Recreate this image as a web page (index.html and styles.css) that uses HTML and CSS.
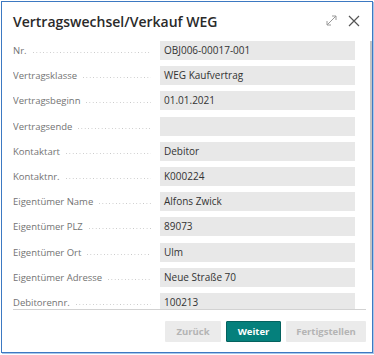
FILE: index.html
```html
<!DOCTYPE html>
<html lang="de">

<head>
    <meta charset="UTF-8">
    <meta name="viewport" content="width=device-width, initial-scale=1.0">
    <title>Vertragswechsel/Verkauf WEG</title>
    <link rel="stylesheet" href="styles.css">
</head>

<body>
    <div class="window">
        <div class="header">
            <h1 class="title">Vertragswechsel/Verkauf WEG</h1>
            <div class="headerIcons">
                <svg class="iconExpand" width="11" height="11" viewBox="0 0 11 11">
                    <path d="M1 10 L10 1 M6 1 H10 V5 M1 6 V10 H5" fill="none" stroke="#9a9a9a" stroke-width="1"/>
                </svg>
                <svg class="iconClose" width="12" height="12" viewBox="0 0 12 12">
                    <path d="M1 1 L11 11 M11 1 L1 11" fill="none" stroke="#555" stroke-width="1.2"/>
                </svg>
            </div>
        </div>

        <div class="form">
            <div class="row"><div class="label"><span>Nr.</span><i class="leader"></i></div><div class="field">OBJ006-00017-001</div></div>
            <div class="row"><div class="label"><span>Vertragsklasse</span><i class="leader"></i></div><div class="field">WEG Kaufvertrag</div></div>
            <div class="row"><div class="label"><span>Vertragsbeginn</span><i class="leader"></i></div><div class="field">01.01.2021</div></div>
            <div class="row"><div class="label"><span>Vertragsende</span><i class="leader"></i></div><div class="field"></div></div>
            <div class="row"><div class="label"><span>Kontaktart</span><i class="leader"></i></div><div class="field">Debitor</div></div>
            <div class="row"><div class="label"><span>Kontaktnr.</span><i class="leader"></i></div><div class="field">K000224</div></div>
            <div class="row"><div class="label"><span>Eigentümer Name</span><i class="leader"></i></div><div class="field">Alfons Zwick</div></div>
            <div class="row"><div class="label"><span>Eigentümer PLZ</span><i class="leader"></i></div><div class="field">89073</div></div>
            <div class="row"><div class="label"><span>Eigentümer Ort</span><i class="leader"></i></div><div class="field">Ulm</div></div>
            <div class="row"><div class="label"><span>Eigentümer Adresse</span><i class="leader"></i></div><div class="field">Neue Straße 70</div></div>
            <div class="row"><div class="label"><span>Debitorennr.</span><i class="leader"></i></div><div class="field">100213</div></div>
        </div>

        <div class="footer">
            <button class="btn" disabled>Zurück</button>
            <button class="btn primary">Weiter</button>
            <button class="btn wide" disabled>Fertigstellen</button>
        </div>

        <div class="scrollThumb"></div>
    </div>
</body>

</html>
```

FILE: styles.css
```css
html,
body {
    margin: 0;
    padding: 0;
    background-color: #fff;
}

body {
    font-family: "Open Sans", "Noto Sans", Arial, sans-serif;
    width: 374px;
    height: 355px;
    overflow: hidden;
}

.window {
    position: relative;
    box-sizing: border-box;
    width: 372px;
    height: 352px;
    margin: 1px 0 0 1px;
    border: 1px solid #3d79c2;
    box-shadow: 1px 1px 0 #a7c6ea;
    background-color: #fff;
    display: flex;
    flex-direction: column;
}

.header {
    height: 38px;
    flex: none;
    display: flex;
    align-items: center;
    justify-content: space-between;
    padding: 0 12px 0 11px;
}

.title {
    margin: 0;
    font-size: 14px;
    font-weight: 600;
    color: #2a2a2a;
}

.headerIcons {
    display: flex;
    align-items: center;
    gap: 11px;
    margin-top: -1px;
}

.iconExpand,
.iconClose {
    display: block;
}

.form {
    height: 268px;
    flex: none;
    overflow: hidden;
    margin: 0 6px 0 11px;
    border-bottom: 1px solid #d2d2d2;
    padding-top: 1px;
    box-sizing: content-box;
    display: flex;
    flex-direction: column;
    gap: 6.2px;
}

.row {
    display: grid;
    grid-template-columns: 147px 195px;
    height: 19px;
    flex: none;
}

.label {
    display: flex;
    align-items: center;
    padding-right: 9px;
    font-size: 9.5px;
    color: #737373;
    white-space: nowrap;
}

.leader {
    flex: 1;
    height: 1px;
    margin: 4px 0 0 6px;
    background-image: linear-gradient(to right, #c8c8c8 1px, transparent 1px);
    background-size: 3.4px 1px;
    background-repeat: repeat-x;
}

.field {
    background-color: #e8e8e8;
    font-size: 10px;
    color: #333;
    line-height: 19px;
    padding-left: 4px;
    white-space: nowrap;
}

.footer {
    flex: 1;
    display: flex;
    justify-content: flex-end;
    align-items: flex-start;
    gap: 5px;
    padding: 11px 6px 0 0;
}

.btn {
    font-family: inherit;
    height: 21px;
    width: 56px;
    padding: 0;
    border: none;
    border-radius: 1px;
    font-size: 9.5px;
    font-weight: 700;
    color: #b4b4b4;
    background-color: #ebebeb;
    cursor: pointer;
}

.btn.primary {
    width: 55px;
    color: #fff;
    background-color: #05807c;
    border: 1px solid #04625f;
}

.btn.wide {
    width: 80px;
}

.scrollThumb {
    position: absolute;
    right: 0;
    top: 39px;
    width: 2px;
    height: 229px;
    background-color: #c4c4c4;
}
```
